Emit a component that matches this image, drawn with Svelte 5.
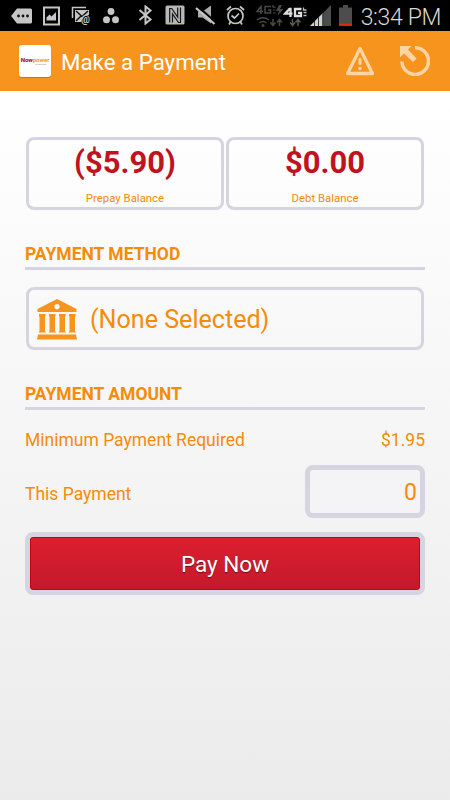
<script lang="ts">
  export let prepay = -5.9;
  export let debt = 0;
  export let minimum = 1.95;
  export let method = '(None Selected)';

  let amount = '0';

  const money = (n: number) => (n < 0 ? `($${Math.abs(n).toFixed(2)})` : `$${n.toFixed(2)}`);

  $: balances = [
    { label: 'Prepay Balance', value: money(prepay) },
    { label: 'Debt Balance', value: money(debt) },
  ];
</script>

<div class="screen">
  <div class="status-bar">
    <div class="notifications">
      <!-- message -->
      <svg width="22" height="20" viewBox="0 0 22 20">
        <path d="M6 2.500h13.500q1.500 0 1.500 1.500v12q0 1.500-1.500 1.500H6L0 10z" fill="#c6c6c6" />
        <g fill="#111"><circle cx="7.500" cy="10" r="1.400" /><circle cx="12" cy="10" r="1.400" /><circle cx="16.500" cy="10" r="1.400" /></g>
      </svg>
      <!-- picture -->
      <svg width="18" height="20" viewBox="0 0 18 20">
        <rect x="1" y="1.500" width="15" height="17" fill="none" stroke="#c6c6c6" stroke-width="2" />
        <path d="M3.500 14.500v-3l3-3 2 2 4.500-4.500v8.500z" fill="#c6c6c6" />
      </svg>
      <!-- mail -->
      <svg width="21" height="20" viewBox="0 0 21 20">
        <path d="M1.500 12V1.500H15" fill="none" stroke="#c6c6c6" stroke-width="1.500" />
        <path d="M4 4h14v5q-6 0-8 7H4z" fill="#c6c6c6" />
        <path d="M5 5l6 5.500L17 5M5 15l5-5" fill="none" stroke="#111" stroke-width="1.500" />
        <text x="10" y="17" class="at">@</text>
      </svg>
      <!-- dots -->
      <svg width="18" height="20" viewBox="0 0 18 20">
        <g fill="#c6c6c6"><circle cx="9" cy="5.500" r="3.400" /><circle cx="4.500" cy="13.800" r="3.500" /><circle cx="13.500" cy="13.800" r="3.500" /></g>
      </svg>
    </div>

    <div class="system">
      <!-- bluetooth -->
      <svg width="17" height="20" viewBox="0 0 17 20">
        <path d="M1.500 5l11 9.500-5 4V1.500l5 4-11 9.500" fill="none" stroke="#c6c6c6" stroke-width="2" />
      </svg>
      <!-- nfc -->
      <svg width="20" height="20" viewBox="0 0 20 20">
        <path d="M2 .5h16q1.500 0 1.500 1.500v16q0 1.500-1.500 1.500H2Q.5 19.500.5 18V2Q.5.5 2 .5z" fill="#b8b8b8" />
        <path d="M4.700 17.500V3.500h2l6 8.500V2.500M7.500 17.500V9l6 8.500h2v-15" fill="none" stroke="#151515" stroke-width="1.200" />
      </svg>
      <!-- muted -->
      <svg width="21" height="20" viewBox="0 0 21 20">
        <path d="M3 6.500h4.500L16 .5v18l-8.500-6H3z" fill="#aaa" />
        <path d="M1 0l19 16.500" stroke="#000" stroke-width="2" />
        <path d="M1 3l18.500 16" stroke="#c6c6c6" stroke-width="2.200" />
      </svg>
      <!-- alarm -->
      <svg width="19" height="20" viewBox="0 0 19 20">
        <g fill="none" stroke="#c6c6c6" stroke-width="1.700">
          <circle cx="9.500" cy="11" r="7.500" />
          <path d="M1 5l4-3.500M18 5l-4-3.500M5.500 10.500l3 2.500 4.500-4.500M4.500 17L3 19.500M14.500 17l1.500 2.500" />
        </g>
      </svg>
      <!-- inactive network -->
      <svg width="29" height="23" viewBox="0 0 29 23">
        <g fill="none" stroke="#484848" stroke-width="1.500">
          <path d="M6 9V1.500L2 6.500h6M16 1.500h-6v6.500h5.500V5H13" />
          <path d="M18 0v2.200h2.500M18 5H20.500M18 8H20.500" stroke-width="1.200" />
          <path d="M2 15q6-4.500 12 0M4.500 18q3.500-3 7 0M18 14v6M15.500 17.500L18 20.500l2.500-3M24.500 21v-6M22 17.500l2.500-3 2.500 3" />
          <circle cx="8" cy="20.500" r=".8" />
        </g>
        <path d="M24 0h3l-2 4h3.500l-6 7 1.500-5h-3z" fill="#484848" />
      </svg>
      <!-- active network -->
      <svg class="active" width="25" height="23" viewBox="0 0 25 23">
        <path d="M7.500 12V4H6.500L2 8.700h7.500M18.500 4h-6.500v7h6V7.800h-3" fill="none" stroke="#dedede" stroke-width="2.300" />
        <path d="M20.500 2.500V5H23.500M20.500 7.500H23.500M20.500 10.500H23.500" fill="none" stroke="#bbb" stroke-width="1.300" />
        <path d="M9.500 14v6.500M7 17.500l2.500 3 2.500-3M15 21v-6.500M12.500 17.500l2.500-3 2.500 3" fill="none" stroke="#585858" stroke-width="1.500" />
      </svg>
      <!-- signal -->
      <svg class="signal" width="21" height="21" viewBox="0 0 21 21">
        <path d="M21 0v21H0z" fill="#4c4c4c" />
        <path d="M13 8v13H0z" fill="#d2d2d2" />
        <path d="M4.500 14v7M8.500 9v12M12.700 5v16" stroke="#111" stroke-width=".8" />
      </svg>
      <!-- battery -->
      <svg class="battery" width="13" height="21" viewBox="0 0 13 21">
        <path d="M4 0h5v2.500h4V21H0V2.500h4z" fill="#4d4d4d" />
        <path d="M0 19.500h13" stroke="#dd2d08" stroke-width="1.600" />
      </svg>
    </div>
    <span class="time">3:34 PM</span>
  </div>

  <header>
    <div class="logo">
      <span class="brand"><b>Now</b>power</span>
      <span class="tagline">by your side</span>
    </div>
    <h1>Make a Payment</h1>
    <button class="icon-btn" aria-label="Alerts">
      <svg width="30" height="30" viewBox="0 0 30 30">
        <path d="M15 2.500L27.500 27.500h-25z" fill="none" stroke="#fdd5a4" stroke-width="3.300" stroke-linejoin="round" />
        <path d="M15 13.200v4.300" stroke="#fdd5a4" stroke-width="3" stroke-linecap="round" />
        <circle cx="15" cy="22.500" r="1.800" fill="#fdd5a4" />
      </svg>
    </button>
    <button class="icon-btn" aria-label="Back">
      <svg width="30" height="30" viewBox="0 0 30 30">
        <path d="M15 1.800A13.300 13.300 0 1 1 1.900 15.500" fill="none" stroke="#fdd5a4" stroke-width="3.500" />
        <path d="M0 0h11.500L8 3.500l8.500 9-3.500 3.500-9-8.500L0 11.500z" fill="#fdd5a4" />
      </svg>
    </button>
  </header>

  <main>
    <div class="balances">
      {#each balances as b}
        <div class="balance">
          <strong>{b.value}</strong>
          <span>{b.label}</span>
        </div>
      {/each}
    </div>

    <h2>PAYMENT METHOD</h2>
    <button class="method">
      <svg width="40" height="41" viewBox="0 0 40 41">
        <g fill="#f7941e">
          <path fill-rule="evenodd" d="M20 0L39.500 10v3H.5v-3zM20 5a2.700 2.700 0 1 0 .01 0z" />
          <path d="M2 15h6.500v2l-.5 1v14l1 1.500H1.500L2.500 32V18l-.5-1z" />
          <path d="M12 15h6.500v2l-.5 1v14l1 1.500h-7.500l1-1.500V18l-.5-1z" />
          <path d="M22 15h6.500v2l-.5 1v14l1 1.500h-7.500l1-1.500V18l-.5-1z" />
          <path d="M32 15h6.500v2l-.5 1v14l1 1.500h-7.500l1-1.500V18l-.5-1z" />
          <path d="M1 35.500h38l1 5H0z" />
        </g>
      </svg>
      <span>{method}</span>
    </button>

    <h2>PAYMENT AMOUNT</h2>
    <div class="row minimum">
      <span>Minimum Payment Required</span>
      <span>{money(minimum)}</span>
    </div>
    <div class="row payment">
      <label for="amount">This Payment</label>
      <input id="amount" bind:value={amount} />
    </div>

    <button class="pay">Pay Now</button>
  </main>
</div>

<style>
  :global(body) {
    background: #ebebeb;
  }

  .screen {
    width: 450px;
    height: 800px;
    display: flex;
    flex-direction: column;
    overflow: hidden;
    font-family: Roboto, sans-serif;
    color: #f68b09;
  }

  button, input {
    font: inherit;
    color: inherit;
    box-sizing: border-box;
    margin: 0;
  }

  svg {
    display: block;
    flex-shrink: 0;
  }

  /* Status bar */
  .status-bar {
    height: 31px;
    flex-shrink: 0;
    display: flex;
    align-items: flex-start;
    padding: 0 9px 0 11px;
    background: #000;
  }

  .notifications, .system {
    display: flex;
    gap: 10px;
    padding-top: 6px;
  }

  .system {
    margin-left: 18px;
    padding-top: 5px;
  }

  .at {
    font: bold 10px Roboto, sans-serif;
    fill: #c6c6c6;
  }

  .active { margin-left: -11px; }
  .signal { margin-left: -8px; }
  .battery { margin-left: -2px; }

  .time {
    margin-left: auto;
    font-size: 23px;
    line-height: 35px;
    letter-spacing: -0.35px;
    font-weight: 300;
    color: #d8d8d8;
    white-space: nowrap;
  }

  /* Header */
  header {
    height: 60px;
    flex-shrink: 0;
    display: flex;
    align-items: center;
    box-sizing: border-box;
    padding: 0 20px 0 19px;
    background: #f7941e;
  }

  .logo {
    width: 32px;
    height: 32px;
    display: flex;
    flex-direction: column;
    justify-content: center;
    align-items: center;
    background: #fff;
    border-radius: 3px;
    box-shadow: 0 1px 1px rgba(120, 60, 0, 0.35);
  }

  .brand {
    font-size: 6.2px;
    line-height: 6px;
    letter-spacing: -0.1px;
    font-weight: 700;
    color: #f39a2b;
  }

  .brand b { color: #c0142c; }

  .tagline {
    align-self: flex-end;
    margin-right: 5px;
    font-size: 2px;
    line-height: 2px;
    color: #777;
  }

  h1 {
    flex: 1;
    margin: 2px 0 0 10px;
    font-size: 22.3px;
    font-weight: 400;
    color: #fff;
  }

  .icon-btn {
    padding: 0;
    margin-right: 25px;
    border: none;
    background: none;
  }

  .icon-btn:last-child { margin-right: 0; }

  /* Content */
  main {
    flex: 1;
    display: flex;
    flex-direction: column;
    padding: 46px 25px 0;
    background: linear-gradient(#fff, #ebebeb);
  }

  .balances {
    display: flex;
    gap: 2px;
    padding: 0 1px;
  }

  .balance {
    flex: 1;
    height: 73px;
    box-sizing: border-box;
    display: flex;
    flex-direction: column;
    align-items: center;
    border: 3px solid #d5d4e0;
    border-radius: 8px;
  }

  .balance strong {
    font-size: 31px;
    line-height: 45px;
    color: #c1121f;
  }

  .balance span {
    margin-top: 6px;
    font-size: 11.4px;
    line-height: 15px;
  }

  h2 {
    margin: 33px 0 0;
    height: 27px;
    box-sizing: border-box;
    border-bottom: 3px solid #d5d4e0;
    font-size: 17.5px;
    line-height: 23px;
    font-weight: 700;
  }

  .method {
    height: 63px;
    margin: 17px 1px 0;
    display: flex;
    align-items: center;
    gap: 13px;
    padding: 2px 8px 0;
    border: 3px solid #d5d4e0;
    border-radius: 8px;
    background: none;
    font-size: 25.1px;
  }

  .row {
    display: flex;
    justify-content: space-between;
    align-items: center;
    font-size: 17.5px;
  }

  .minimum {
    height: 20px;
    margin: 20px 0 15px;
  }

  .payment label { padding-top: 4px; }

  input {
    width: 120px;
    height: 53px;
    padding: 2px 3px 0;
    border: 5px solid #d5d4e0;
    border-radius: 8px;
    background: #f4f4f6;
    font-size: 23px;
    text-align: right;
  }

  .pay {
    height: 63px;
    margin-top: 14px;
    padding: 0;
    border: 5px solid #d5d4e0;
    border-radius: 8px;
    background: linear-gradient(#dc1f30, #c4192b) padding-box;
    box-shadow: inset 0 0 0 1px #c8000d;
    font-size: 22.5px;
    color: #fff;
    text-shadow: 0 1px 1px rgba(0, 0, 0, 0.5);
  }
</style>
